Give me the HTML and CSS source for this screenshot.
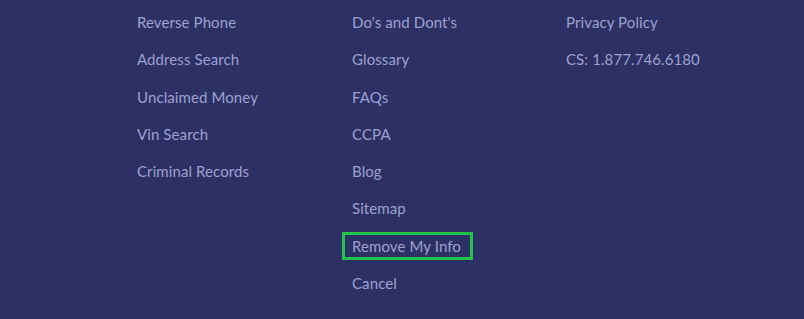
FILE: index.html
```html
<!DOCTYPE html>
<html>
<head>
<meta charset="utf-8">
<link rel="stylesheet" href="styles.css">
</head>
<body>
<footer class="footer">
  <ul class="col">
    <li><a href="#">Reverse Phone</a></li>
    <li><a href="#">Address Search</a></li>
    <li><a href="#">Unclaimed Money</a></li>
    <li><a href="#">Vin Search</a></li>
    <li><a href="#">Criminal Records</a></li>
  </ul>
  <ul class="col">
    <li><a href="#">Do's and Dont's</a></li>
    <li><a href="#">Glossary</a></li>
    <li><a href="#">FAQs</a></li>
    <li><a href="#">CCPA</a></li>
    <li><a href="#">Blog</a></li>
    <li><a href="#">Sitemap</a></li>
    <li><a href="#" class="focused">Remove My Info</a></li>
    <li><a href="#">Cancel</a></li>
  </ul>
  <ul class="col">
    <li><a href="#">Privacy Policy</a></li>
    <li><span>CS: 1.877.746.6180</span></li>
  </ul>
</footer>
</body>
</html>
```
FILE: styles.css
```css
html, body {
  margin: 0;
  padding: 0;
  background: #2c3064;
}
body {
  width: 804px;
  height: 319px;
  overflow: hidden;
  font-family: Lato, "Open Sans", sans-serif;
}
.footer {
  display: grid;
  grid-template-columns: 215px 214px 200px;
  padding: 4px 0 0 137px;
}
.col {
  list-style: none;
  margin: 0;
  padding: 0;
}
.col li {
  height: 37.3px;
  line-height: 37.3px;
  font-size: 15px;
  letter-spacing: 0.1px;
  color: #9ea1cf;
}
.col a {
  color: #9ea1cf;
  text-decoration: none;
}
.col a.focused {
  display: inline-block;
  line-height: 22px;
  padding: 0 9px 0 7px;
  margin: 0 -9px 0 -7px;
  outline: 3px solid #22c34a;
}
```
